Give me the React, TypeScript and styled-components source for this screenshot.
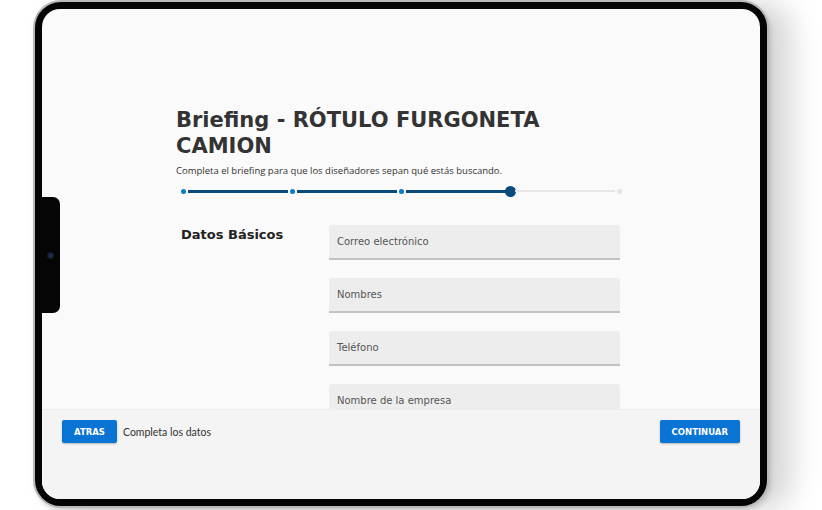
import styled, { createGlobalStyle } from 'styled-components'

const GlobalStyle = createGlobalStyle`
	html, body {
		margin: 0;
		padding: 0;
		background: #ffffff;
	}
	body {
		width: 822px;
		height: 510px;
		overflow: hidden;
		font-family: "DejaVu Sans", "Open Sans", sans-serif;
	}
`

const steps = [true, true, true, true, false]

const fields = ['Correo electrónico', 'Nombres', 'Teléfono', 'Nombre de la empresa']

const App = () => {
	return (
		<Stage>
			<GlobalStyle />
			<Device>
				<Screen>
					<Notch>
						<Camera />
					</Notch>
					<Content>
						<Title>Briefing - RÓTULO FURGONETA CAMION</Title>
						<Subtitle>Completa el briefing para que los diseñadores sepan qué estás buscando.</Subtitle>
						<Progress>
							{steps.map((done, i) => (
								<Step key={i} $last={i === steps.length - 1}>
									<DotSlot>
										<Dot $current={i === 3} $done={done} />
									</DotSlot>
									{i < steps.length - 1 && <Line $done={i < 3} />}
								</Step>
							))}
						</Progress>
						<FormRow>
							<SectionLabel>Datos Básicos</SectionLabel>
							<Fields>
								{fields.map((f) => (
									<Field key={f}>{f}</Field>
								))}
							</Fields>
						</FormRow>
					</Content>
					<Footer>
						<FooterLeft>
							<Button type="button">ATRAS</Button>
							<Hint>Completa los datos</Hint>
						</FooterLeft>
						<Button type="button">CONTINUAR</Button>
					</Footer>
				</Screen>
			</Device>
		</Stage>
	)
}

export default App

const Stage = styled.div`
	width: 822px;
	height: 510px;
	padding: 0 0 0 33px;
	box-sizing: border-box;
`

const Device = styled.div`
	width: 736px;
	height: 508px;
	box-sizing: border-box;
	border: 2px solid #b9b9b9;
	border-radius: 28px;
	padding: 7px;
	background: #050505;
	box-shadow: 22px 2px 30px rgba(0, 0, 0, 0.17), 2px 3px 4px rgba(0, 0, 0, 0.12);
`

const Screen = styled.div`
	position: relative;
	width: 100%;
	height: 100%;
	border-radius: 18px;
	background: #fafafa;
	overflow: hidden;
	display: flex;
	flex-direction: column;
`

const Notch = styled.div`
	position: absolute;
	left: 0;
	top: 188px;
	width: 18px;
	height: 116px;
	background: #050505;
	border-radius: 0 7px 7px 0;
	display: flex;
	align-items: center;
	justify-content: center;
	z-index: 2;
`

const Camera = styled.div`
	width: 5px;
	height: 5px;
	border-radius: 50%;
	background: #1c2a4a;
	box-shadow: 0 0 0 1px #101828;
	margin-left: -2px;
`

const Content = styled.div`
	flex: 1;
	overflow: hidden;
	padding: 98px 0 0 134px;
	color: #333333;
`

const Title = styled.h1`
	margin: 0;
	width: 380px;
	font-size: 21px;
	line-height: 26px;
	font-weight: 700;
	color: #333333;
`

const Subtitle = styled.p`
	margin: 5px 0 0;
	font-family: "Open Sans", "DejaVu Sans", sans-serif;
	font-size: 9.5px;
	line-height: 14px;
	color: #333333;
`

const Progress = styled.div`
	display: flex;
	align-items: center;
	height: 12px;
	margin: 7px 0 0 1.5px;
`

const Step = styled.div<{ $last: boolean }>`
	display: flex;
	align-items: center;
	width: ${(p) => (p.$last ? '11px' : '109px')};
`

const DotSlot = styled.span`
	flex: 0 0 11px;
	display: flex;
	align-items: center;
	justify-content: center;
`

const Dot = styled.span<{ $current: boolean; $done: boolean }>`
	width: ${(p) => (p.$current ? '11px' : '5px')};
	height: ${(p) => (p.$current ? '11px' : '5px')};
	border-radius: 50%;
	background: ${(p) => (p.$current ? '#0b4a7d' : p.$done ? '#0a7ac6' : '#e4e4e4')};
`

const Line = styled.span<{ $done: boolean }>`
	flex: 1;
	height: ${(p) => (p.$done ? '3px' : '2px')};
	margin: 0 -1px;
	background: ${(p) => (p.$done ? '#0b4a7d' : '#e6e6e6')};
`

const FormRow = styled.div`
	display: grid;
	grid-template-columns: 153px 291px;
	margin-top: 28px;
`

const SectionLabel = styled.h2`
	margin: 2px 0 0 5px;
	font-size: 13px;
	line-height: 16px;
	font-weight: 700;
	color: #222222;
`

const Fields = styled.div`
	display: flex;
	flex-direction: column;
	gap: 18px;
`

const Field = styled.div`
	height: 35px;
	box-sizing: border-box;
	background: #ededed;
	border-bottom: 2px solid #c2c2c2;
	border-radius: 3px 3px 0 0;
	padding: 0 8px;
	display: flex;
	align-items: center;
	font-size: 10px;
	color: #555555;
`

const Footer = styled.div`
	flex: 0 0 90px;
	box-sizing: border-box;
	background: #f4f4f4;
	border-top: 1px solid #ececec;
	padding: 10px 20px 0;
	display: flex;
	justify-content: space-between;
	align-items: flex-start;
`

const FooterLeft = styled.div`
	display: flex;
	align-items: center;
	gap: 6px;
`

const Button = styled.button`
	height: 23px;
	padding: 0 12px;
	border: none;
	border-radius: 2px;
	background: #0a74d4;
	color: #ffffff;
	font-family: "DejaVu Sans", sans-serif;
	font-size: 8.5px;
	font-weight: 700;
	box-shadow: 0 1px 2px rgba(0, 0, 0, 0.25);
`

const Hint = styled.span`
	font-family: "Lato", "Open Sans", sans-serif;
	font-size: 10.5px;
	color: #333333;
`
